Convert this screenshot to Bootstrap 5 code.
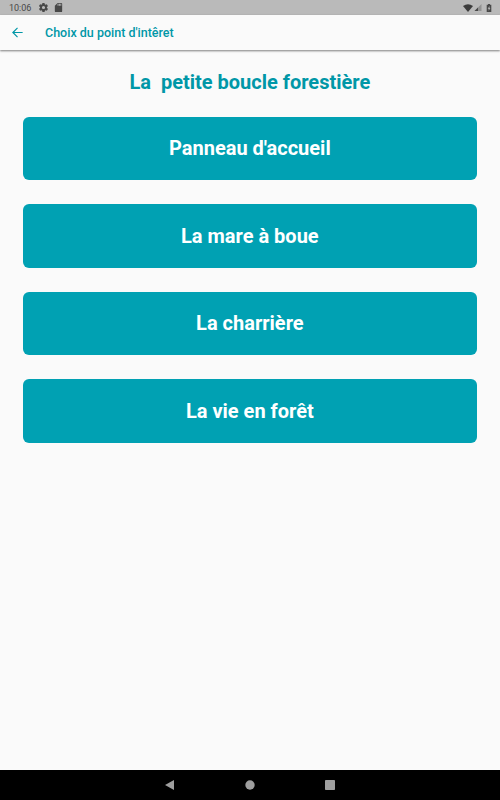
<!DOCTYPE html>
<html lang="fr">
<head>
<meta charset="utf-8">
<meta name="viewport" content="width=device-width, initial-scale=1">
<title>Choix du point d'intêret</title>
<link href="https://cdn.jsdelivr.net/npm/bootstrap@5.3.0/dist/css/bootstrap.min.css" rel="stylesheet">
<style>
body{font-family:Roboto,sans-serif;background:#fafafa;height:100vh;overflow:hidden}
.status-bar{height:15px;background:#bababa;font-size:9px;line-height:15px;color:#484848;padding:0 8.500px 0 9px}
.status-bar svg,.app-bar svg,.system-nav svg{display:block;flex:none}
.status-time{width:28.500px;padding-top:1px}
.app-bar{height:35px;background:#fafafa;box-shadow:0 1px 2px rgba(0,0,0,.5);padding:0 11px;color:#0097a7;z-index:1}
.app-title{font-size:12.500px;font-weight:500;line-height:18px;margin-left:21px}
.trail-title{font-size:20px;font-weight:700;line-height:24px;color:#0097a7;white-space:pre;margin:0 0 22.500px}
main{padding:20px 22.800px 0 22.500px}
.poi-list{gap:24px}
.btn.poi{--bs-btn-color:#fff;--bs-btn-bg:#00a1b3;--bs-btn-hover-color:#fff;--bs-btn-hover-bg:#0097a7;height:63.500px;border:0;border-radius:6px;font-size:20px;font-weight:700;line-height:24px;padding:0}
.system-nav{height:30px;background:#000;gap:68px}
</style>
</head>
<body class="d-flex flex-column">
<div class="status-bar d-flex align-items-center">
  <span class="status-time">10:06</span>
  <svg width="11" height="11" viewBox="0 0 24 24" fill="#484848"><path d="M19.400 13a7.800 7.800 0 0 0 0-2l2.100-1.600a.5.500 0 0 0 .1-.7l-2-3.400a.5.500 0 0 0-.6-.2l-2.500 1a7.300 7.300 0 0 0-1.700-1l-.4-2.600a.5.500 0 0 0-.5-.5h-4a.5.500 0 0 0-.5.500L9 5.100a7.700 7.700 0 0 0-1.700 1l-2.500-1a.5.500 0 0 0-.6.200l-2 3.400a.5.500 0 0 0 .1.700L4.500 11a7.800 7.800 0 0 0 0 2l-2.100 1.600a.5.500 0 0 0-.1.700l2 3.400c.1.200.4.300.6.200l2.500-1a7.300 7.300 0 0 0 1.700 1l.4 2.600c0 .3.200.5.500.5h4c.2 0 .5-.2.500-.5l.4-2.600a7.700 7.700 0 0 0 1.700-1l2.500 1c.2.100.5 0 .6-.2l2-3.400a.5.500 0 0 0-.1-.7zM12 15.500a3.500 3.500 0 1 1 0-7 3.500 3.500 0 0 1 0 7z"/></svg>
  <svg class="ms-1" width="11" height="11" viewBox="0 0 24 24" fill="#484848"><path d="M18 2h-8L4 8v12a2 2 0 0 0 2 2h12a2 2 0 0 0 2-2V4a2 2 0 0 0-2-2zm-6 6h-2V4h2zm3 0h-2V4h2zm3 0h-2V4h2z"/></svg>
  <svg class="ms-auto" width="10" height="10" viewBox="0 0 10 10" fill="#3c3c3c"><path d="M0 3Q5-.6 10 3L5 9z"/></svg>
  <svg width="9" height="9" viewBox="0 0 9 9"><path fill="#929292" d="M8.500 1v7h-7z"/><path fill="#484848" d="M5 4.500V8H1.500z"/></svg>
  <svg class="ms-1" width="6" height="10" viewBox="0 0 6 10" fill="#484848"><path fill-rule="evenodd" d="M2 1h2v.8h1.300V9H.7V1.800H2zM3.500 2.900 1.700 5.800h1v2L4.400 5h-.9z"/></svg>
</div>
<header class="app-bar d-flex align-items-center position-relative">
  <svg width="13" height="13" viewBox="0 0 24 24" fill="#0097a7"><path d="M21.500 10.900H6.100l6.700-6.700L11.300 2.600 1.900 12l9.400 9.400 1.500-1.600-6.700-6.700h15.400z"/></svg>
  <span class="app-title">Choix du point d'intêret</span>
</header>
<main class="flex-grow-1">
  <h1 class="trail-title text-center">La  petite boucle forestière</h1>
  <div class="poi-list d-flex flex-column">
    <button type="button" class="btn poi w-100">Panneau d'accueil</button>
    <button type="button" class="btn poi w-100">La mare à boue</button>
    <button type="button" class="btn poi w-100">La charrière</button>
    <button type="button" class="btn poi w-100">La vie en forêt</button>
  </div>
</main>
<nav class="system-nav d-flex justify-content-center align-items-center">
  <svg width="12" height="12" viewBox="0 0 12 12" fill="#9e9e9e"><path d="M10 1v10L1 6z"/></svg>
  <svg width="12" height="12" viewBox="0 0 12 12" fill="#9e9e9e"><circle cx="6" cy="6" r="4.700"/></svg>
  <svg width="12" height="12" viewBox="0 0 12 12" fill="#9e9e9e"><rect x="1" y="1" width="10" height="10" rx=".8"/></svg>
</nav>
<script src="https://cdn.jsdelivr.net/npm/bootstrap@5.3.0/dist/js/bootstrap.bundle.min.js"></script>
</body>
</html>
